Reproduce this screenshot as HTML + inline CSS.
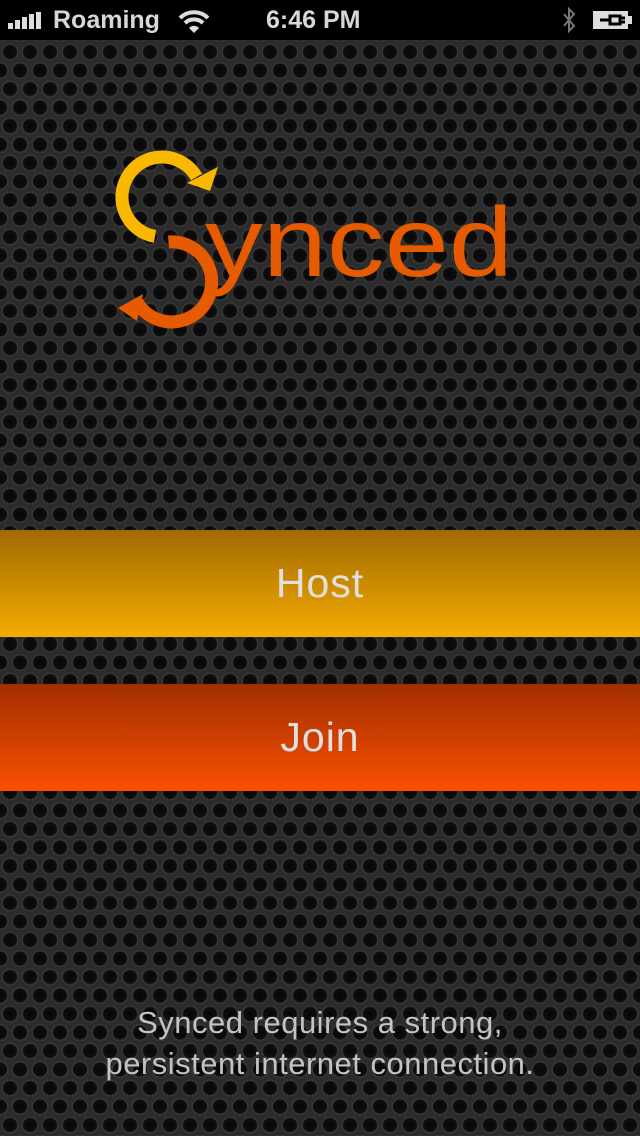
<!DOCTYPE html>
<html><head><meta charset="utf-8"><style>
*{margin:0;padding:0;box-sizing:border-box}
body{width:640px;height:1136px;overflow:hidden;position:relative;font-family:"Liberation Sans",sans-serif;
background-color:#2b2b2b;
background-image:
radial-gradient(circle at 10px 10px,#070707 0,#0d0d0d 6.5px,#3c3c3c 7.8px,rgba(43,43,43,0) 9px),
radial-gradient(circle at 10px 10px,#070707 0,#0d0d0d 6.5px,#3c3c3c 7.8px,rgba(43,43,43,0) 9px);
background-size:20px 37px,20px 37px;
background-position:0 42px,10px 60.5px;}
.sb{position:absolute;top:0;left:0;width:640px;height:40px;background:#000;color:#d8d8d8;font-size:25px;font-weight:bold}
.sb span{position:absolute;top:6px}
.btn{position:absolute;left:0;width:640px;height:107px;color:#e0e0e0;font-size:41px;text-align:center;line-height:107px;letter-spacing:1px}
.foot{position:absolute;top:1002px;width:640px;text-align:center;color:#c4c4c4;font-size:31px;line-height:41px;letter-spacing:0.5px}
</style></head><body>
<div class="sb">
<svg style="position:absolute;left:8px;top:12px" width="38" height="17"><rect x="0" y="11" width="5" height="6" fill="#ddd"/><rect x="7" y="8" width="5" height="9" fill="#ddd"/><rect x="14" y="5" width="5" height="12" fill="#ddd"/><rect x="21" y="2" width="5" height="15" fill="#ddd"/><rect x="28" y="0" width="5" height="17" fill="#ddd"/></svg>
<span style="left:53px">Roaming</span>
<svg style="position:absolute;left:178px;top:9px" width="32" height="24" viewBox="0 0 32 24"><path d="M2 9 A20 20 0 0 1 30 9" stroke="#ddd" stroke-width="4" fill="none"/><path d="M7 14 A13 13 0 0 1 25 14" stroke="#ddd" stroke-width="4" fill="none"/><path d="M11 19 L16 24 L21 19 A7 7 0 0 0 11 19Z" fill="#ddd"/></svg>
<span style="left:266px">6:46 PM</span>
<svg style="position:absolute;left:560px;top:5px" width="18" height="30"><path d="M4 9 L14 21 L9 26 L9 4 L14 9 L4 21" stroke="#777" stroke-width="2" fill="none"/></svg>
<svg style="position:absolute;left:592px;top:10px" width="42" height="20"><rect x="1" y="1" width="35" height="18" fill="#ddd"/><rect x="36" y="6" width="4" height="8" fill="#ddd"/><path d="M8 10 H18 M18 6 H28 V14 H18Z M28 8 H33 M28 12 H33" stroke="#000" stroke-width="3" fill="none"/></svg>
</div>
<svg style="position:absolute;left:0;top:0" width="640" height="360">
<path d="M196.6 177 A40 40 0 1 0 155 236.4" stroke="#fbb800" stroke-width="13" fill="none"/>
<polygon points="218,167 210,191 187,183" fill="#fbb800"/>
<path d="M168.5 242 A40 40 0 1 1 137 302" stroke="#e65a00" stroke-width="13" fill="none"/>
<polygon points="118,308 143,294 137,321" fill="#e65a00"/>
<text x="205" y="276" font-family="Liberation Sans, sans-serif" font-size="98" fill="#e65a00" textLength="308" lengthAdjust="spacingAndGlyphs">ynced</text>
</svg>
<div class="btn" style="top:530px;background:linear-gradient(#a06a00,#f6ab00)">Host</div>
<div class="btn" style="top:684px;background:linear-gradient(#a22e00,#fa5000)">Join</div>
<div class="foot">Synced requires a strong,<br>persistent internet connection.</div>
</body></html>
